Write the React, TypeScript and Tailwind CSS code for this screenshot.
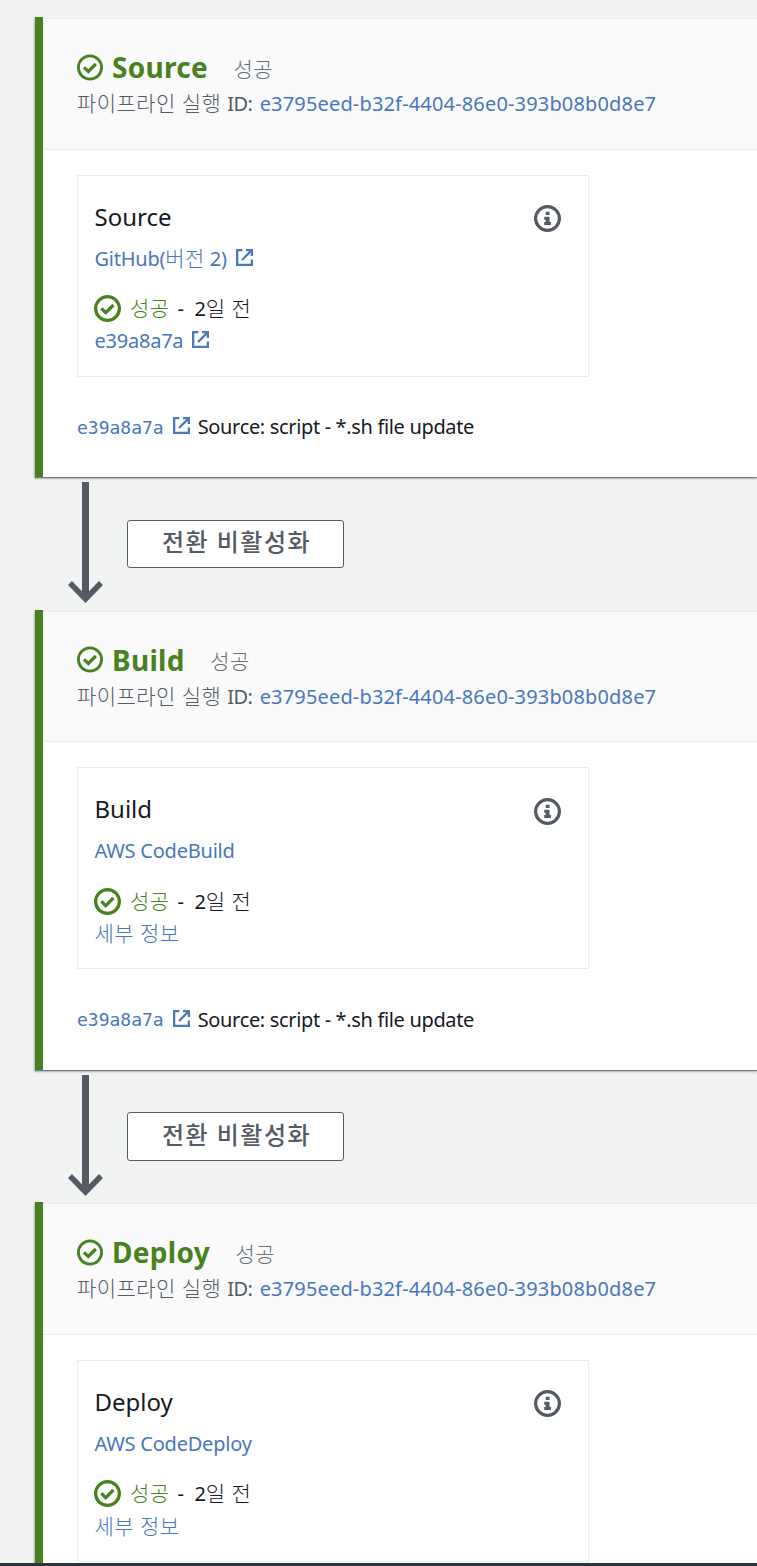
import type { ReactNode } from "react";

type Stage = {
    name: string;
    provider: ReactNode;
    details: ReactNode;
    commit?: string;
};

const executionId = "e3795eed-b32f-4404-86e0-393b08b0d8e7";

const Ko = ({ children }: { children: ReactNode }) => (
    <span className="text-[21px] font-light tracking-[0.45px]">{children}</span>
);

const CheckIcon = ({ bold = false }: { bold?: boolean }) => (
    <svg width="27" height="27" viewBox="0 0 27 27" fill="none" stroke="#488220" className="shrink-0">
        <circle cx={bold ? 13.5 : 13} cy="13.5" r={bold ? 11.9 : 11.6} strokeWidth={bold ? 3.2 : 2.8} />
        <path d={bold ? "M7.4 13.4L11.7 17.7L19.4 10" : "M7 13.4L11.3 17.5L18.8 10"} strokeWidth="3.2" />
    </svg>
);

const InfoIcon = () => (
    <svg width="27" height="27" viewBox="0 0 27 27" fill="none" className="shrink-0">
        <circle cx="13.5" cy="13.5" r="11.9" stroke="#545b64" strokeWidth="3.2" />
        <path d="M11.7 6.7H15.5V10H11.7ZM10.2 11.8H15.5V17H17V20H10.2V17H11.7V14.7H10.2Z" fill="#545b64" />
    </svg>
);

const ExternalIcon = () => (
    <svg width="17" height="17" viewBox="0 0 17 17" fill="none" stroke="#4a7ab9" strokeWidth="2.3" className="mb-[3px] shrink-0">
        <path d="M6.4 1.15H1.15V15.85H15.85V10.4" />
        <path d="M10 1.15H15.85V7M15.4 1.6L6 11" />
    </svg>
);

const StageCard = ({ name, provider, details, commit }: Stage) => (
    <section className="ml-[35px] flex h-[460px] shrink-0 flex-col border-l-8 border-[#488220] bg-[#f2f3f3] shadow-[0_1px_1px_0_rgba(0,28,36,0.4),-1px_2px_2px_0_rgba(0,28,36,0.25)]">
        <div className="mt-px h-[131.8px] shrink-0 border-y border-[#eaeded] bg-[#fafafa] pl-[34px] pt-[30px]">
            <div className="flex h-9 items-center">
                <CheckIcon />
                <h2 className="ml-2 text-[28px] font-bold leading-9 tracking-[0.3px] text-[#488220]">{name}</h2>
                <span className="ml-[25.5px] mt-[5px] text-[#687078]"><Ko>성공</Ko></span>
            </div>
            <div className="mt-px flex h-9 items-center whitespace-pre text-[20px] text-[#545b64]">
                <Ko>파이프라인 실행 </Ko>
                <span className="tracking-[-0.6px]">ID:</span>
                <a className="ml-[7.5px] tracking-[0.16px] text-[#4a76bd]">{executionId}</a>
            </div>
        </div>

        <div className="flex-1 bg-white pl-[34px] pt-[25px]">
            <div className="flex h-[202.2px] w-[512px] justify-between border border-[#eaeded] pl-[16.5px] pr-[27px]">
                <div className="pt-[23px]">
                    <h3 className="h-9 text-[24px] leading-9 text-[#16191f]">{name}</h3>
                    <div className="mt-[6px] flex h-9 items-center gap-[9px] text-[20px] tracking-[-0.23px] text-[#4a76bd]">{provider}</div>
                    <div className="mt-[14px] -ml-[0.5px] flex h-9 items-center text-[20px] text-[#16191f]">
                        <CheckIcon bold />
                        <span className="ml-[9px] text-[#488220]"><Ko>성공</Ko></span>
                        <span className="ml-2 whitespace-pre">-  2<Ko>일 전</Ko></span>
                    </div>
                    <div className="-mt-[3.4px] flex h-9 items-center gap-[9px] text-[20px] tracking-[-0.23px] text-[#4a76bd]">{details}</div>
                </div>
                <div className="pt-[29.3px]"><InfoIcon /></div>
            </div>
            {commit && (
                <div className="mt-[32.2px] flex h-9 items-center text-[20px] text-[#16191f]">
                    <a className="mr-[9px] font-['DejaVu_Sans_Mono',monospace] text-[18px] text-[#4a76bd]">e39a8a7a</a>
                    <ExternalIcon />
                    <span className="ml-2 tracking-[-0.34px]">{commit}</span>
                </div>
            )}
        </div>
    </section>
);

const Transition = () => (
    <div className="flex h-[132.5px] shrink-0 pl-[68px]">
        <svg width="35" height="122" viewBox="0 0 35 122" fill="none" stroke="#545b64" className="mt-[5px] shrink-0">
            <path d="M17.5 0V116" strokeWidth="7" />
            <path d="M2 101L17.5 117L33 101" strokeWidth="5.5" />
        </svg>
        <button className="ml-6 mt-[42.8px] h-[48.4px] w-[217px] rounded-[3px] border border-[#545b64] bg-white pb-[3px] pl-0.5 text-[24px] font-medium leading-none tracking-[1.5px] text-[#545b64]">
            전환 비활성화
        </button>
    </div>
);

const stages: Stage[] = [
    {
        name: "Source",
        provider: <><a>GitHub(<Ko>버전</Ko> 2)</a><ExternalIcon /></>,
        details: <><a>e39a8a7a</a><ExternalIcon /></>,
        commit: "Source: script - *.sh file update",
    },
    {
        name: "Build",
        provider: <a>AWS CodeBuild</a>,
        details: <a><Ko>세부 정보</Ko></a>,
        commit: "Source: script - *.sh file update",
    },
    { name: "Deploy", provider: <a>AWS CodeDeploy</a>, details: <a><Ko>세부 정보</Ko></a> },
];

export default function App() {
    return (
        <div className="flex h-[1566px] w-full flex-col overflow-hidden bg-[#f2f3f3] font-['Noto_Sans','Noto_Sans_CJK_KR',sans-serif]">
            <main className="flex min-h-0 flex-1 flex-col overflow-hidden pt-[17px]">
                {stages.map((stage, i) => (
                    <div key={stage.name} className="shrink-0">
                        <StageCard {...stage} />
                        {i < stages.length - 1 && <Transition />}
                    </div>
                ))}
            </main>
            <footer className="h-[3px] shrink-0 bg-[#2b3442]" />
        </div>
    );
}
